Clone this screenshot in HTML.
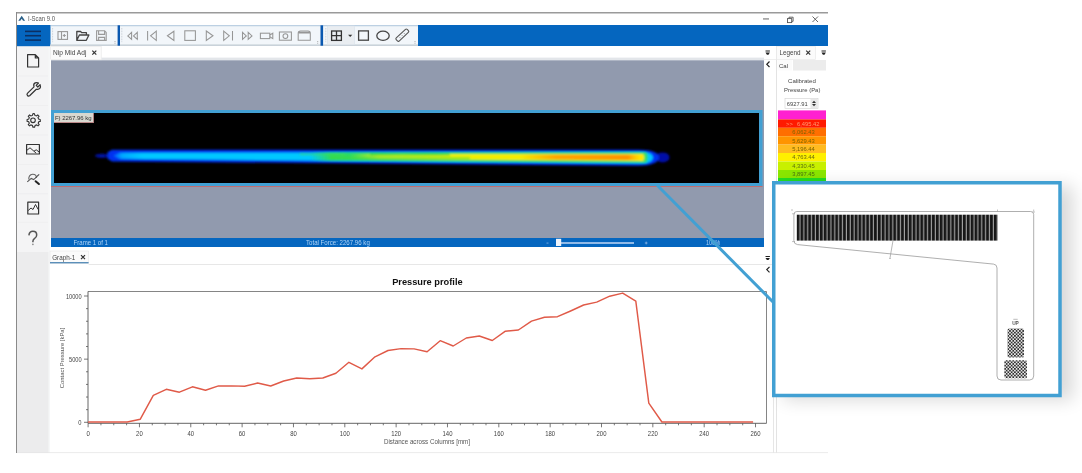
<!DOCTYPE html>
<html><head><meta charset="utf-8">
<style>
html,body{margin:0;padding:0;background:#fff;width:1082px;height:473px;overflow:hidden}
svg{display:block;will-change:transform;filter:blur(0.4px)}
text{font-family:"Liberation Sans",sans-serif}
</style></head>
<body>
<svg width="1082" height="473" viewBox="0 0 1082 473">
<defs>
  <filter id="hm" x="-5%" y="-100%" width="110%" height="300%"><feGaussianBlur stdDeviation="0.9"/></filter>
  <filter id="hm2" x="-5%" y="-100%" width="110%" height="300%"><feGaussianBlur stdDeviation="0.8"/></filter>
  <filter id="shadow" x="-30%" y="-30%" width="160%" height="160%"><feGaussianBlur stdDeviation="9"/></filter>
  <filter id="sb" x="-5%" y="-5%" width="110%" height="110%"><feGaussianBlur stdDeviation="0.35"/></filter>
  <linearGradient id="gCy" gradientUnits="userSpaceOnUse" x1="112" x2="142" y1="0" y2="0">
    <stop offset="0" stop-color="#0050ff"/>
    <stop offset="0.35" stop-color="#00a8ff"/>
    <stop offset="1" stop-color="#00c8ff"/>
  </linearGradient>
  <linearGradient id="gGreen" x1="0" x2="1" y1="0" y2="0">
    <stop offset="0" stop-color="#30dc50" stop-opacity="0"/>
    <stop offset="0.06" stop-color="#30dc50" stop-opacity="0.9"/>
    <stop offset="1" stop-color="#40e060" stop-opacity="1"/>
  </linearGradient>
  <linearGradient id="gYel" x1="0" x2="1" y1="0" y2="0">
    <stop offset="0" stop-color="#d8f020" stop-opacity="0"/>
    <stop offset="0.1" stop-color="#d8f020" stop-opacity="0.9"/>
    <stop offset="0.35" stop-color="#f0f000" stop-opacity="1"/>
    <stop offset="1" stop-color="#ffe600" stop-opacity="1"/>
  </linearGradient>
  <linearGradient id="gOr" x1="0" x2="1" y1="0" y2="0">
    <stop offset="0" stop-color="#ff9800" stop-opacity="0"/>
    <stop offset="0.3" stop-color="#ff9a00" stop-opacity="0.9"/>
    <stop offset="0.9" stop-color="#ff9000" stop-opacity="1"/>
    <stop offset="1" stop-color="#ffb000" stop-opacity="0.1"/>
  </linearGradient>
  <pattern id="comb" patternUnits="userSpaceOnUse" x="796.7" y="0" width="3.8673" height="10">
    <rect x="0" y="0" width="3.8673" height="10" fill="#a0a0a0"/>
    <rect x="0" y="0" width="2.7" height="10" fill="#161616"/>
  </pattern>
  <pattern id="chk" patternUnits="userSpaceOnUse" x="1007.5" y="328.5" width="3.3" height="3.3">
    <rect width="3.3" height="3.3" fill="#e6e6e6"/>
    <rect width="1.65" height="1.65" fill="#303030"/>
    <rect x="1.65" y="1.65" width="1.65" height="1.65" fill="#303030"/>
  </pattern>
  <linearGradient id="shR" x1="0" x2="1" y1="0" y2="0">
    <stop offset="0" stop-color="#cfcfcf"/>
    <stop offset="1" stop-color="#ffffff"/>
  </linearGradient>
</defs>

<!-- ===== window frame ===== -->
<rect x="16" y="12" width="812" height="441" fill="#ffffff"/>
<rect x="16" y="12" width="812" height="1.5" fill="#9a9a9a"/>
<rect x="16" y="12" width="1" height="441" fill="#8a8a8a"/>
<!-- title -->
<path d="M18.3 20.7 L21.7 15.8 L25.1 20.7 L23.1 20.7 L21.7 18.7 L20.3 20.7 Z" fill="#2b6088"/>
<text x="28" y="21.4" font-size="6.8" fill="#555" textLength="27" lengthAdjust="spacingAndGlyphs">I-Scan 9.0</text>
<rect x="763" y="18.5" width="6" height="0.9" fill="#555"/>
<rect x="787.5" y="18.6" width="4.2" height="4" fill="none" stroke="#555" stroke-width="0.9"/><path d="M789 18.6V17.2H793.1V21.3H791.7" fill="none" stroke="#555" stroke-width="0.9"/>
<path d="M812.5 16.5 L818 22 M818 16.5 L812.5 22" stroke="#555" stroke-width="0.9"/>

<!-- blue toolbar -->
<rect x="17" y="25" width="811" height="21" fill="#0566bf"/>
<rect x="25" y="30.6" width="16" height="1.6" fill="#0b2f63"/>
<rect x="25" y="34.9" width="16" height="1.6" fill="#0b2f63"/>
<rect x="25" y="39.3" width="16" height="1.6" fill="#0b2f63"/>
<rect x="50.5" y="25.3" width="367.5" height="20" fill="#f2f6fa"/>
<rect x="50.5" y="25.3" width="367.5" height="1" fill="#c3d3e2"/>
<rect x="50" y="44.4" width="368" height="2" fill="#c9d2da"/>
<rect x="117.6" y="25.3" width="2.4" height="20.4" fill="#0a58b0"/>
<rect x="320.5" y="25.3" width="2.6" height="20.4" fill="#0a58b0"/>
<path d="M52.6 28V42.5M121.8 28V42.5M325.8 28V42.5" stroke="#b0b8c0" stroke-width="0.7" stroke-dasharray="0.8 0.8"/>
<path d="M115 41.2v0.8M115 42.8v0.8M317.7 41.2v0.8M317.7 42.8v0.8M415 41.2v0.8M415 42.8v0.8" stroke="#888" stroke-width="0.8"/>
<!-- toolbar icons -->
<g fill="none" stroke="#999" stroke-width="1.1">
  <rect x="58" y="31.6" width="9.5" height="7.8"/>
  <path d="M61.5 31.6V39.4M62.8 35.5h3M64.3 34v3"/>
  <path d="M96.6 30.8h8l1.6 1.6v8h-9.6z M98.6 30.8v3.6h6v-3.6 M98.6 40.4v-3h6v3"/>
</g>
<g fill="none" stroke="#444" stroke-width="1.3" stroke-linejoin="round">
  <path d="M76.8 40.3V31.5h3.8l1 1.2h4.8v2.5 M76.8 40.3h9.5l2.6-5.3h-9.5z"/>
</g>
<g fill="none" stroke="#969696" stroke-width="1.05" stroke-linejoin="miter">
  <path d="M131.6 32.3L127.8 35.9L131.6 39.4Z M137.3 32.3L133.5 35.9L137.3 39.4Z"/>
  <path d="M147.6 31V40.6 M156.3 31.2L150.6 35.8L156.3 40.3Z"/>
  <path d="M173.9 31.2L167.4 35.8L173.9 40.4Z"/>
  <rect x="184.8" y="30.8" width="10.6" height="9.6"/>
  <path d="M206.3 31L213 35.8L206.3 40.5Z"/>
  <path d="M223.7 31.2L229.3 35.8L223.7 40.3Z M232.5 31V40.6"/>
  <path d="M242.5 32.3L246.3 35.9L242.5 39.4Z M248.2 32.3L252 35.9L248.2 39.4Z"/>
  <rect x="260.4" y="33.2" width="9.4" height="5.4"/>
  <path d="M269.8 35L272.8 33.2V38.6L269.8 36.8"/>
  <rect x="279.4" y="32" width="12" height="8.2"/>
  <circle cx="285.4" cy="36.1" r="2.4"/>
  <path d="M298.2 40.2V33.2Q298.2 31 300.6 31H308Q310.3 31 310.3 33.2V40.2Z"/>
  <path d="M298.5 32.6H310" stroke-width="1.8"/>
</g>
<rect x="327.4" y="26" width="27" height="18.6" fill="#e9edf1" stroke="#d9e1e9" stroke-width="0.6"/>
<g fill="none" stroke="#333" stroke-width="1.3">
  <rect x="331.6" y="31" width="9.8" height="9.4"/>
  <path d="M336.5 31V40.4M331.6 35.7H341.4"/>
</g>
<path d="M348.1 34.8H352.3L350.2 36.9Z" fill="#333"/>
<g fill="none" stroke="#444" stroke-width="1.3">
  <rect x="358.6" y="30.9" width="9.8" height="9.3"/>
  <ellipse cx="383" cy="35.8" rx="6.2" ry="4.6"/>
  <rect x="394.8" y="33.1" width="15" height="4.2" rx="1.2" transform="rotate(-43 402.3 35.2)" stroke="#555" stroke-width="1.1"/>
  <path d="M399.6 37.2l1 1M401.8 35.2l0.8 0.8M404 33.2l1 1" stroke="#666" stroke-width="0.7"/>
</g>

<!-- sidebar -->
<rect x="17" y="46" width="32" height="206" fill="#f4f4f5"/><rect x="17" y="252" width="32" height="201" fill="#ececed"/>
<rect x="48.5" y="46" width="1.5" height="407" fill="#f6f7f8"/>
<g stroke="#ebebed" stroke-width="0.6">
  <path d="M18 76H48M18 105.5H48M18 135H48M18 164.5H48M18 193.7H48M18 222.4H48"/>
</g>
<g fill="none" stroke="#333" stroke-width="1.2" stroke-linejoin="round">
  <path d="M27.6 54.6H35.3L38.6 57.9V67H27.6Z M35.3 54.6V57.9H38.6"/>
  <path d="M27.5 95.5Q26.5 94.5 27.4 93.4L34 86.8Q33 84 35.2 82.9Q37 82.2 38.5 83L36.2 85.4L37.8 87L40.1 84.7Q40.8 86.5 40 88.2Q38.6 90 36.3 89.2L29.6 95.8Q28.5 96.6 27.5 95.5Z"/>
  <rect x="26.6" y="144.5" width="12.8" height="9.5"/>
  <path d="M26.6 150.5L30 147.8L36.2 153.2M34 151.2L36.2 149.8L39.4 152.2" stroke-width="1"/>
  <rect x="27.8" y="202.2" width="10.8" height="11.8"/>
  <path d="M28.2 210.5L31 208L33 209.5L35.5 204.5L38.2 209.5" stroke-width="1"/>
</g>
<g fill="none" stroke="#333" stroke-width="1.1">
  <path d="M33.2 113.6l1.2 0.2l0.5 1.6l1.5 0.6l1.4-1l1.2 1.2l-1 1.4l0.6 1.5l1.6 0.5l0.2 1.7l-1.6 0.5l-0.6 1.5l1 1.4l-1.2 1.2l-1.4-1l-1.5 0.6l-0.5 1.6h-1.7l-0.5-1.6l-1.5-0.6l-1.4 1l-1.2-1.2l1-1.4l-0.6-1.5l-1.6-0.5v-1.7l1.6-0.5l0.6-1.5l-1-1.4l1.2-1.2l1.4 1l1.5-0.6l0.5-1.6z"/>
  <circle cx="33" cy="120.3" r="2.3"/>
</g>
<g fill="none" stroke="#666" stroke-width="1.1">
  <path d="M28.8 179.5Q28.5 174.8 32.6 174.2Q36.4 174 36.6 178"/>
  <path d="M27.3 181.8L31.2 178.4L33.6 179.6L35.3 178.2L36.8 176.5L39.2 174.3" stroke="#555"/>
</g>
<path d="M35.6 181.2L38.9 184" stroke="#222" stroke-width="2" stroke-linecap="round"/>
<path d="M28.9 235.3Q29.4 231.3 32.9 231.3Q36.7 231.3 36.7 235Q36.7 237.2 34.4 238.7Q32.9 239.8 32.9 241.6V242.2" fill="none" stroke="#555" stroke-width="1.5"/><circle cx="32.9" cy="244.3" r="0.85" fill="#888"/>

<!-- top tab bar -->
<rect x="50" y="46" width="726" height="14" fill="#ffffff"/><rect x="17" y="45.2" width="33" height="1" fill="#0566bf"/>
<rect x="50.7" y="46.3" width="50.5" height="13.4" fill="#fbfbfb" stroke="#e6e6e6" stroke-width="0.6"/>
<text x="53" y="55.3" font-size="6.6" fill="#444">Nip Mid Adj</text>
<path d="M92.3 50.6L96.3 54.6M96.3 50.6L92.3 54.6" stroke="#333" stroke-width="1.2"/>
<path d="M765.5 50.6h4.4v0.9h-4.4z M765.5 52.5h4.4l-1.4 2.2h-1.6z" fill="#222"/>
<path d="M769.5 61.5L766.8 64.3L769.5 67" fill="none" stroke="#222" stroke-width="1.2"/>

<rect x="101" y="59" width="675" height="0.7" fill="#e8e8e8"/>
<!-- gray view -->
<rect x="101.5" y="57.6" width="662.5" height="2.8" fill="#e3e6ea"/><rect x="51" y="60.3" width="713" height="177.7" fill="#919aae"/>
<rect x="51" y="110" width="711.5" height="76" fill="#42a0d3"/>
<rect x="54" y="113" width="705" height="70" fill="#000"/>
<rect x="51" y="186" width="711.5" height="0.9" fill="#c86a6a"/>

<!-- F label -->
<rect x="54" y="113" width="39" height="9.2" fill="#d8d8d0"/>
<rect x="54" y="122" width="39.5" height="0.8" fill="#e0a0a0"/>
<rect x="93" y="113" width="0.8" height="9.8" fill="#e0a0a0"/>
<text x="55" y="120.3" font-size="6" fill="#333" textLength="36.5">F) 2267.96 kg</text>

<!-- heat map -->
<g filter="url(#hm)">
  <ellipse cx="102" cy="155.8" rx="7" ry="2.1" fill="#0012a0"/>
  <ellipse cx="662.5" cy="157.4" rx="7" ry="5" fill="#0010a8"/>
  <path d="M107.5 152.2L112 149.8H638Q658 149.6 659 157.5Q658 165.6 638 165.8L112 161.4L107.5 158.8Z" fill="#0030f0"/>
  <path d="M113 155.7L120 152.9L642 151.9Q652.5 152 653 157.5Q652.5 163.2 642 163.6L120 158.8Z" fill="url(#gCy)"/>
</g>
<g filter="url(#hm2)">
  <path d="M310 152.6H646Q649 157.5 646 162.6L310 160.5Z" fill="url(#gGreen)"/>
  <path d="M350 154.1H643Q645 157.5 643 161L350 158.9Z" fill="url(#gYel)"/>
  <path d="M520 154.8H640L640 160L520 159.2Z" fill="url(#gOr)"/>
  <path d="M370 153.6Q400 154.8 430 153.8L450 154.3L450 155.4L370 155.6Z" fill="#30d838" opacity="0.85"/>
  <path d="M330 156.6Q370 157.6 470 157.3L470 158.7L330 158.8Z" fill="#40dc38" opacity="0.7"/>
  <path d="M300 153.6Q320 154 345 153.6L345 155L300 155Z" fill="#50e040" opacity="0.6"/>
</g>
<!-- status bar -->
<rect x="51" y="238" width="713" height="9" fill="#0566bf"/>
<text x="73.6" y="244.8" font-size="6.6" fill="#b0d4f6" textLength="34.4" lengthAdjust="spacingAndGlyphs">Frame 1 of 1</text>
<text x="306" y="244.8" font-size="6.6" fill="#b0d4f6" textLength="63.8" lengthAdjust="spacingAndGlyphs">Total Force: 2267.96 kg</text>
<rect x="546.5" y="242.7" width="2" height="0.7" fill="#9ec0ea"/>
<rect x="561" y="242.2" width="73" height="1.6" fill="#b5cff0"/>
<rect x="556" y="238.8" width="5.2" height="7.2" fill="#eef3fa"/>
<path d="M644.8 243h2.8M646.2 241.6v2.8" stroke="#9ec0ea" stroke-width="0.7"/>
<text x="706" y="244.8" font-size="6.6" fill="#b0d4f6" textLength="14" lengthAdjust="spacingAndGlyphs">100%</text>

<!-- graph tab -->
<rect x="50" y="251" width="38.6" height="12.3" fill="#fbfbfb" stroke="#e6e6e6" stroke-width="0.6"/>
<text x="52.2" y="259.6" font-size="6.3" fill="#444">Graph-1</text>
<path d="M81 255.1L85 259.1M85 255.1L81 259.1" stroke="#333" stroke-width="1.2"/>
<rect x="50" y="262" width="38.6" height="1.4" fill="#5b8fb9"/>
<rect x="88.6" y="264" width="685" height="0.8" fill="#e2e2e2"/>
<path d="M765.5 256.0h4.4v0.9h-4.4z M765.5 257.9h4.4l-1.4 2.2h-1.6z" fill="#222"/>
<path d="M769.5 266.8L766.8 269.6L769.5 272.3" fill="none" stroke="#222" stroke-width="1.2"/>

<!-- chart -->
<text x="427.4" y="285.2" font-size="9.25" font-weight="bold" fill="#111" text-anchor="middle">Pressure profile</text>
<path d="M88 291.5H766.5V423.3" fill="none" stroke="#777" stroke-width="0.9"/>
<path d="M88 291.5V423.3H766.5" fill="none" stroke="#555" stroke-width="0.9"/>
<path d="M84.0 422.30H88M86.0 409.67H88M86.0 397.04H88M86.0 384.41H88M86.0 371.78H88M84.0 359.15H88M86.0 346.52H88M86.0 333.89H88M86.0 321.26H88M86.0 308.63H88M84.0 296.00H88M88.10 423.3V427.3M100.94 423.3V425.3M113.77 423.3V425.3M126.60 423.3V425.3M139.44 423.3V427.3M152.28 423.3V425.3M165.11 423.3V425.3M177.94 423.3V425.3M190.78 423.3V427.3M203.62 423.3V425.3M216.45 423.3V425.3M229.28 423.3V425.3M242.12 423.3V427.3M254.96 423.3V425.3M267.79 423.3V425.3M280.62 423.3V425.3M293.46 423.3V427.3M306.30 423.3V425.3M319.13 423.3V425.3M331.97 423.3V425.3M344.80 423.3V427.3M357.63 423.3V425.3M370.47 423.3V425.3M383.31 423.3V425.3M396.14 423.3V427.3M408.98 423.3V425.3M421.81 423.3V425.3M434.64 423.3V425.3M447.48 423.3V427.3M460.32 423.3V425.3M473.15 423.3V425.3M485.99 423.3V425.3M498.82 423.3V427.3M511.65 423.3V425.3M524.49 423.3V425.3M537.33 423.3V425.3M550.16 423.3V427.3M563.00 423.3V425.3M575.83 423.3V425.3M588.67 423.3V425.3M601.50 423.3V427.3M614.34 423.3V425.3M627.17 423.3V425.3M640.01 423.3V425.3M652.84 423.3V427.3M665.68 423.3V425.3M678.51 423.3V425.3M691.35 423.3V425.3M704.18 423.3V427.3M717.02 423.3V425.3M729.85 423.3V425.3M742.69 423.3V425.3M755.52 423.3V427.3" stroke="#555" stroke-width="0.8" fill="none"/>
<g font-size="6.8" fill="#444" text-anchor="end" lengthAdjust="spacingAndGlyphs">
  <text x="81.6" y="298.5" textLength="15.7" lengthAdjust="spacingAndGlyphs">10000</text>
  <text x="81.6" y="361.6" textLength="12.6" lengthAdjust="spacingAndGlyphs">5000</text>
  <text x="81.4" y="424.6" textLength="3.2" lengthAdjust="spacingAndGlyphs">0</text>
</g>
<g font-size="7.3" fill="#444" text-anchor="middle">
  <text x="88.1" y="435.9" textLength="3.4" lengthAdjust="spacingAndGlyphs">0</text>
  <text x="139.4" y="435.9" textLength="6.6" lengthAdjust="spacingAndGlyphs">20</text>
  <text x="190.8" y="435.9" textLength="6.6" lengthAdjust="spacingAndGlyphs">40</text>
  <text x="242.1" y="435.9" textLength="6.6" lengthAdjust="spacingAndGlyphs">60</text>
  <text x="293.5" y="435.9" textLength="6.6" lengthAdjust="spacingAndGlyphs">80</text>
  <text x="344.8" y="435.9" textLength="9.9" lengthAdjust="spacingAndGlyphs">100</text>
  <text x="396.1" y="435.9" textLength="9.9" lengthAdjust="spacingAndGlyphs">120</text>
  <text x="447.5" y="435.9" textLength="9.9" lengthAdjust="spacingAndGlyphs">140</text>
  <text x="498.8" y="435.9" textLength="9.9" lengthAdjust="spacingAndGlyphs">160</text>
  <text x="550.2" y="435.9" textLength="9.9" lengthAdjust="spacingAndGlyphs">180</text>
  <text x="601.5" y="435.9" textLength="9.9" lengthAdjust="spacingAndGlyphs">200</text>
  <text x="652.8" y="435.9" textLength="9.9" lengthAdjust="spacingAndGlyphs">220</text>
  <text x="704.2" y="435.9" textLength="9.9" lengthAdjust="spacingAndGlyphs">240</text>
  <text x="755.5" y="435.9" textLength="9.9" lengthAdjust="spacingAndGlyphs">260</text>
</g>
<text x="427" y="444.4" font-size="6.7" fill="#555" text-anchor="middle" textLength="86" lengthAdjust="spacingAndGlyphs">Distance across Columns [mm]</text>
<text transform="translate(63.6 358) rotate(-90)" font-size="5.9" fill="#555" text-anchor="middle">Contact Pressure [kPa]</text>
<polyline fill="none" stroke="#e05a48" stroke-width="1.45" stroke-linejoin="round" points="88.1,422.0 101.1,422.0 114.2,422.0 127.2,422.0 140.3,419.2 153.3,395.4 166.3,389.3 179.4,392.2 192.4,386.8 205.5,390.3 218.5,385.9 231.5,385.9 244.6,386.3 257.6,383.0 270.7,386.0 283.7,381.0 296.7,378.0 309.8,378.8 322.8,378.0 335.9,373.2 348.9,362.3 361.9,368.9 375.0,356.8 388.0,350.5 401.1,348.6 414.1,348.9 427.1,351.7 440.2,340.7 453.2,346.0 466.3,338.0 479.3,336.0 492.3,340.5 505.4,331.2 518.4,330.0 531.5,321.1 544.5,317.3 557.5,316.7 570.6,311.0 583.6,305.0 596.7,302.1 609.7,296.2 622.7,293.1 635.8,301.1 648.8,403.2 661.9,422.0 674.9,422.0 687.9,422.0 701.0,422.0 714.0,422.0 727.1,422.0 740.1,422.0 753.1,422.0"/>

<!-- legend panel -->
<rect x="773" y="264.5" width="0.8" height="188.5" fill="#e0e0e0"/>
<rect x="776" y="46" width="52" height="407" fill="#ffffff"/>
<rect x="776" y="46" width="0.8" height="407" fill="#dcdcdc"/>
<rect x="776.5" y="46.3" width="39" height="13.4" fill="#fbfbfb" stroke="#e6e6e6" stroke-width="0.6"/>
<text x="779.6" y="55.3" font-size="6.3" fill="#444">Legend</text>
<path d="M806.2 50.6L810.2 54.6M810.2 50.6L806.2 54.6" stroke="#333" stroke-width="1.2"/>
<path d="M821.5 50.6h4.4v0.9h-4.4z M821.5 52.5h4.4l-1.4 2.2h-1.6z" fill="#222"/>
<rect x="777.5" y="60" width="14.5" height="10.5" fill="#fbfbfb"/>
<rect x="793" y="60" width="33" height="10.5" fill="#ececec"/>
<text x="779" y="67.5" font-size="6" fill="#444">Cal</text>
<text x="801.9" y="83" font-size="6.1" fill="#444" text-anchor="middle">Calibrated</text>
<text x="802.2" y="91.8" font-size="5.9" fill="#444" text-anchor="middle">Pressure (Pa)</text>
<rect x="785" y="98.5" width="33" height="10" fill="#fff" stroke="#d0d0d0" stroke-width="0.6"/>
<rect x="810.5" y="99" width="7" height="9" fill="#e8e8e8"/>
<path d="M812 103h4l-2-2.2z M812 104h4l-2 2.2z" fill="#333"/>
<text x="786.8" y="106" font-size="5.8" fill="#444">6927.91</text>

<rect x="778" y="110.4" width="48" height="9" fill="#ff20d0"/>
<rect x="778" y="119.4" width="48" height="8.4" fill="#ff1a00"/>
<rect x="778" y="127.8" width="48" height="8.4" fill="#ff6e00"/>
<rect x="778" y="136.2" width="48" height="8.4" fill="#ff9400"/>
<rect x="778" y="144.6" width="48" height="8.4" fill="#ffbb20"/>
<rect x="778" y="153" width="48" height="8.5" fill="#fff000"/>
<rect x="778" y="161.5" width="48" height="8.5" fill="#c8f000"/>
<rect x="778" y="170" width="48" height="8" fill="#8ae600"/>
<rect x="778" y="178" width="48" height="5" fill="#22dd22"/>
<g font-size="5.8" fill="#7a6400" text-anchor="middle">
  <text x="803.5" y="134">6,062.43</text>
  <text x="803.5" y="142.5">5,629.43</text>
  <text x="803.5" y="151">5,196.44</text>
  <text x="803.5" y="159.4" fill="#6a6a10">4,763.44</text>
  <text x="803.5" y="167.9" fill="#5a7010">4,330.45</text>
  <text x="803.5" y="176.2" fill="#4a7010">3,897.45</text>
</g>
<text x="786" y="125.6" font-size="5.8" fill="#ff9a70">&gt;&gt;</text>
<text x="819.5" y="125.6" font-size="5.8" fill="#ff9a70" text-anchor="end">6,495.42</text>

<rect x="17" y="452.3" width="811" height="0.8" fill="#e6e6e6"/>
<!-- callout shadow -->
<rect x="783" y="186" width="290" height="214" fill="#000" opacity="0.15" filter="url(#shadow)"/>
<!-- callout -->
<rect x="773.75" y="182.75" width="286.25" height="212.75" fill="#fff" stroke="#42a0d3" stroke-width="3.5"/>
<line x1="657" y1="185" x2="774" y2="303" stroke="#42a0d3" stroke-width="3"/>

<!-- sensor drawing -->
<g fill="none" stroke="#9a9a9a" stroke-width="0.8">
  <path d="M793.9 214.5Q793.9 211.5 796.9 211.5H1030.7Q1033.7 211.5 1033.7 214.5V376Q1033.7 380 1029.7 380H1001Q997 380 997 376V268Q997 264.5 993.5 264.1L797.5 244.6Q793.9 244.2 793.9 240.6Z"/>
  <path d="M893 240.6L890 258" stroke-width="0.7"/>
  <path d="M792 213.8h3M792 241.6h3M792 211v-2M997.5 211.5v-2M1033.7 211.5v-2M1035 212h-2.5M889 258.5h2" stroke-width="0.6"/>
</g>
<rect x="796.7" y="214.7" width="201" height="25.9" fill="url(#comb)"/>
<text x="1015.5" y="325.2" font-size="4.8" font-weight="bold" fill="#555" text-anchor="middle">UP</text>
<path d="M1013.3 319.3h4.4" stroke="#777" stroke-width="0.5"/>
<rect x="1007.5" y="328.5" width="16.5" height="29" rx="1.5" fill="url(#chk)"/>
<rect x="1004.3" y="360.3" width="22.7" height="17.9" rx="1.5" fill="url(#chk)"/>

</svg>
</body></html>
